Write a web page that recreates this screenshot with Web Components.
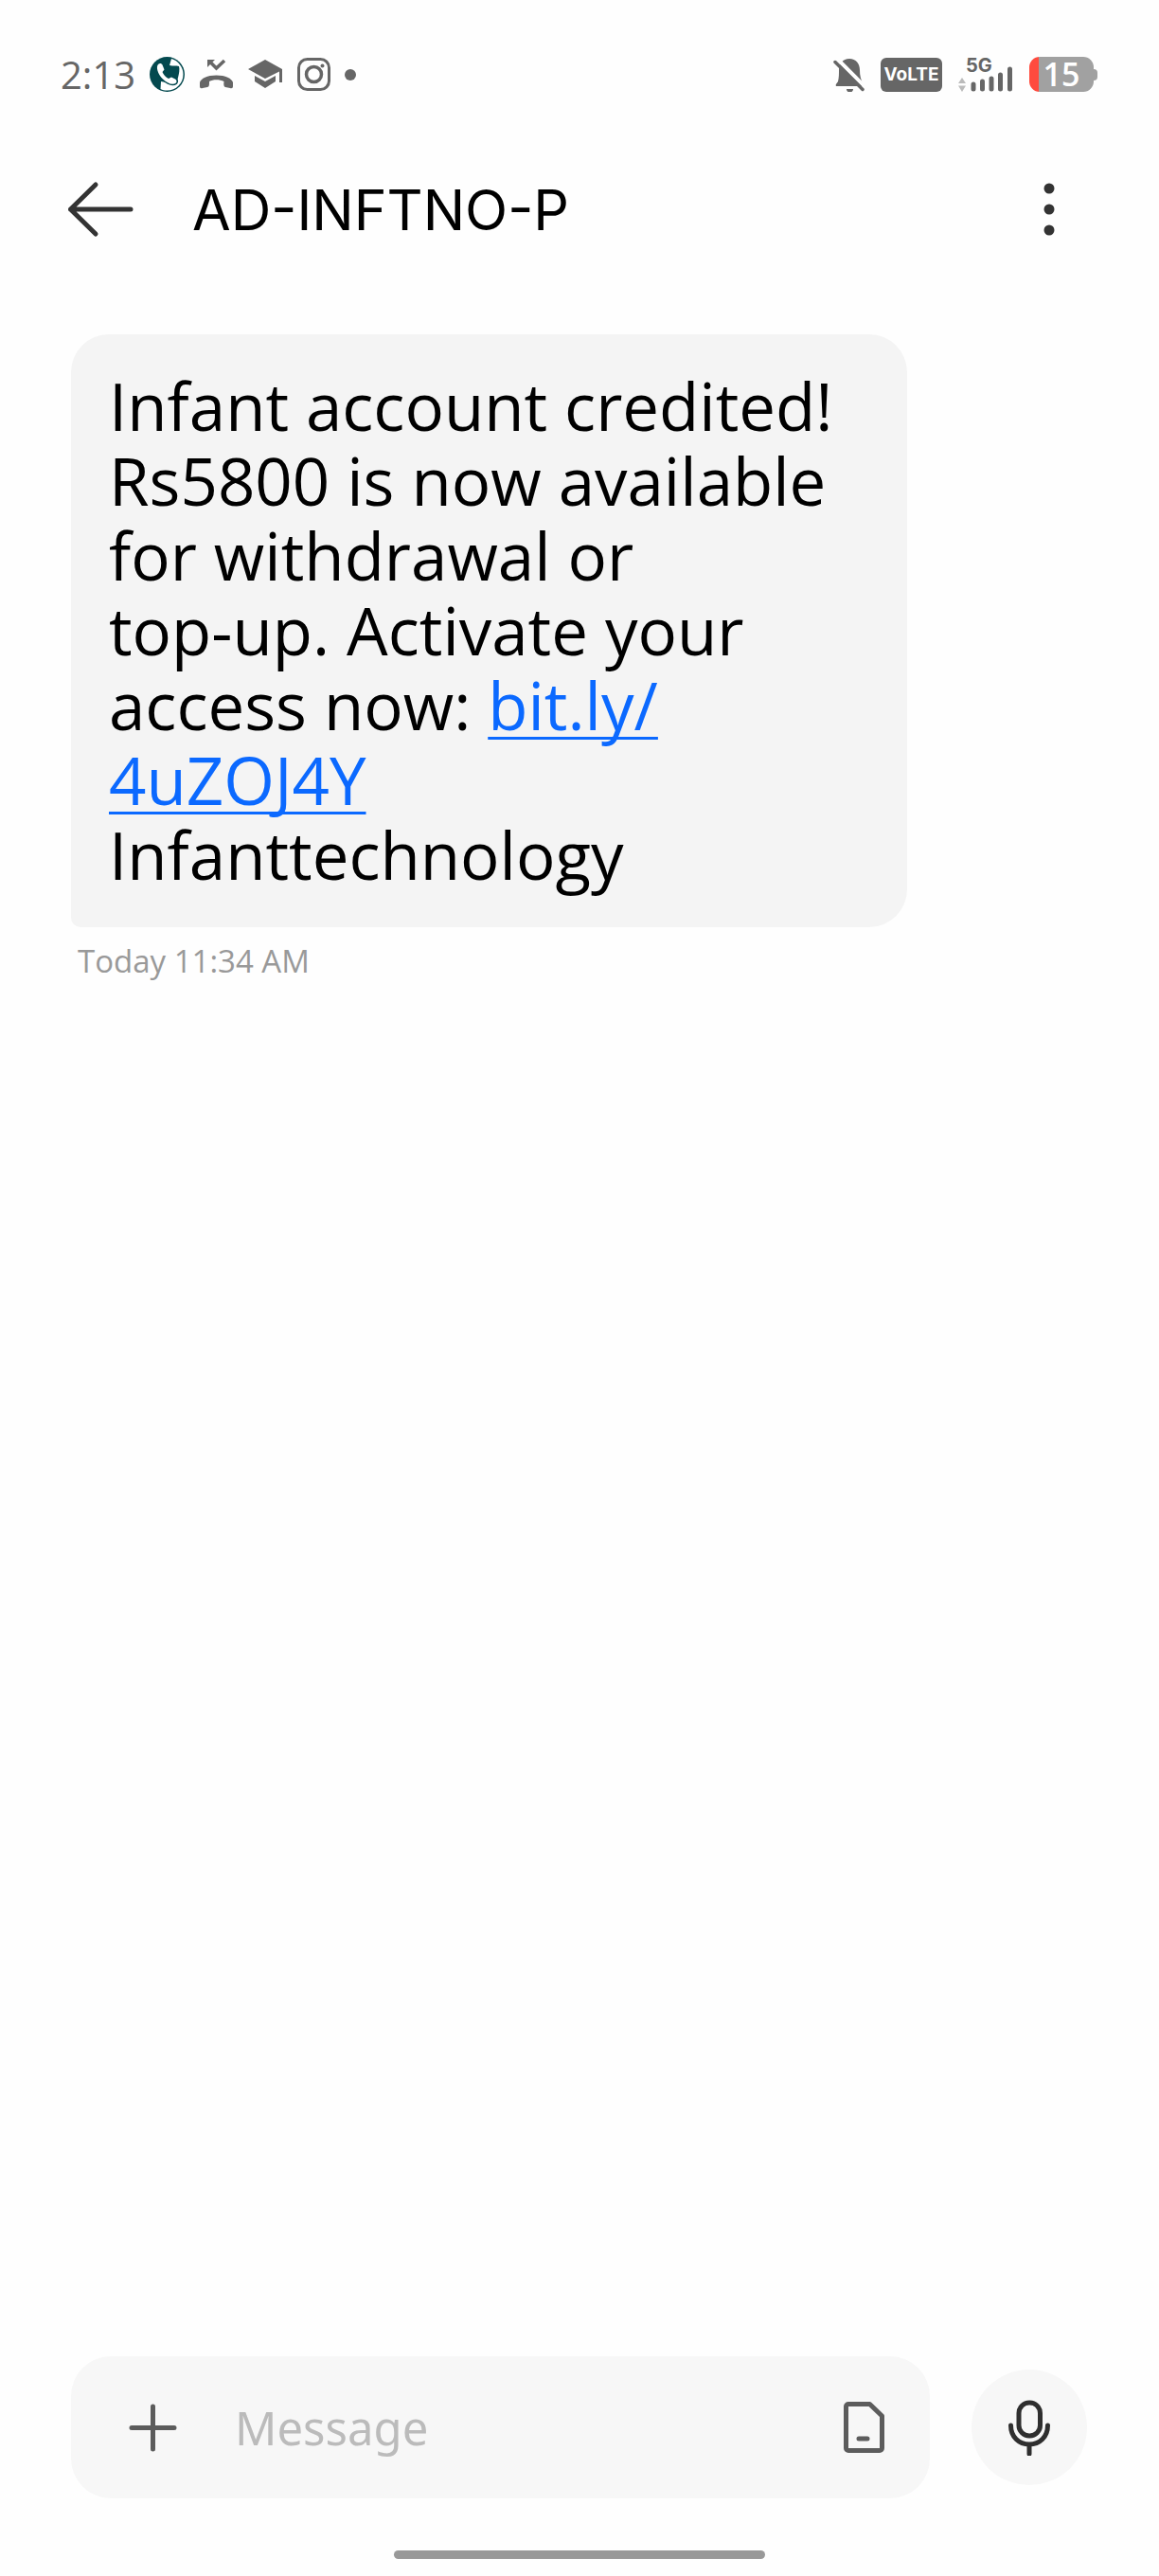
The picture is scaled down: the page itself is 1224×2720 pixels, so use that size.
<!DOCTYPE html>
<html lang="en">
<head>
<meta charset="utf-8">
<meta name="viewport" content="width=device-width, initial-scale=1">
<title>AD-INFTNO-P</title>
<style>
  body {
    margin: 0;
    background: #fefefe;
    color: #000;
    font-family: "Open Sans", "Noto Sans", sans-serif;
  }
</style>
</head>
<body>
<message-screen>
  <status-bar slot="status" time="2:13" battery="15"></status-bar>
  <thread-header slot="header">AD-INFTNO-P</thread-header>
  <message-bubble time="Today 11:34 AM">Infant account credited! Rs5800 is now available for withdrawal or <span style="white-space: nowrap">top-up.</span> Activate your access now: <a href="https://bit.ly/4uZOJ4Y">bit.ly/<wbr>4uZOJ4Y</a><br>Infanttechnology</message-bubble>
  <message-composer slot="composer"></message-composer>
</message-screen>

<script>
/**
 * @class MessageScreen
 * @description Full height column: status bar, header, messages, composer and the gesture bar.
 */
class MessageScreen extends HTMLElement {
  constructor() {
    super()
    this.attachShadow({ mode: 'open' })
    this.shadowRoot.innerHTML = `
      <style>
        :host {
          display: flex;
          flex-direction: column;
          min-height: 100vh;
          box-sizing: border-box;
          padding-bottom: 18px;
        }

        main {
          flex: 1;
          padding: 72px 72px 0 75px;
        }

        .gesture-bar {
          width: 32%;
          height: 9px;
          margin: 55px auto 0;
          border-radius: 5px;
          background: #999;
        }
      </style>

      <slot name="status"></slot>
      <slot name="header"></slot>
      <main><slot></slot></main>
      <slot name="composer"></slot>
      <div class="gesture-bar"></div>
    `
  }
}

/**
 * @class StatusBar
 * @property {string} time - Clock text
 * @property {string} battery - Charge in percent
 */
class StatusBar extends HTMLElement {
  constructor() {
    super()
    this.attachShadow({ mode: 'open' })
  }

  connectedCallback() {
    this.render()
  }

  render() {
    this.shadowRoot.innerHTML = `
      <style>
        :host {
          display: flex;
          justify-content: space-between;
          padding: 60px 65px 0 64px;
          color: #666;
        }

        .group {
          display: flex;
          align-items: center;
          height: 37px;
          gap: 15px;
        }

        .group.system {
          gap: 17px;
        }

        .clock {
          font-size: 40px;
          line-height: 37px;
        }

        svg {
          display: block;
          flex: none;
        }

        .volte {
          width: 65px;
          height: 36px;
          border-radius: 6px;
          background: #666;
          color: #fff;
          font: 700 19px/36px Inter, sans-serif;
          text-align: center;
        }

        .signal {
          position: relative;
          width: 58px;
          height: 37px;
        }

        .signal span {
          position: absolute;
          left: 8px;
          top: 0;
          font: 700 20px/18px Inter, sans-serif;
        }

        .power {
          display: flex;
          align-items: center;
        }

        .battery {
          width: 68px;
          height: 37px;
          border-radius: 11px;
          background: linear-gradient(to right, #ff4b3e 15%, #a1a1a1 15%);
          color: #fff;
          font: 600 34px/37px "Open Sans", sans-serif;
          text-align: center;
        }

        .tip {
          width: 4px;
          height: 12px;
          border-radius: 0 4px 4px 0;
          background: #a1a1a1;
        }
      </style>

      <div class="group">
        <span class="clock">${this.getAttribute('time')}</span>
        <svg width="37" height="37" viewBox="0 0 37 37">
          <circle cx="18.500" cy="18.500" r="18.500" fill="#04494f"/>
          <path d="M23 2C30 4 35.500 11 35.500 18.500C35.500 28 28 35.500 18.500 35.500C16 35.500 13.500 35 11.500 34L12 26L28 29L30 22C31 18 32 13 31 10C28 9 25 10 21 9Z" fill="#fff"/>
          <path d="M9 8C6.500 11 8.500 18 14 23.500C19 28 24 30.500 28 27.500C29 26 28.500 24.500 27 23.500L23 21.500L20 23C17 21.500 14.500 18.500 13.500 16L15.500 13.500L13.500 8.500C12.500 6.500 10.500 6.500 9 8Z" fill="#fff" stroke="#04494f" stroke-width="3" paint-order="stroke"/>
        </svg>
        <svg width="37" height="37" viewBox="0 0 37 37" fill="#666">
          <path d="M1 31V27C2 23 9 19.500 18.500 19.500S35 23 36 27V31C36 33 35 33.500 33 33L28 32C26.500 31.500 26 30 26.500 26C22 23.500 15 23.500 11 26C11 30 11 31.500 9 32L4 33C2 33.500 1 33 1 31Z"/>
          <path d="M12 5.500L18.500 12L27 4" fill="none" stroke="#666" stroke-width="3.500"/>
          <path d="M9 3H17L9 11Z"/>
        </svg>
        <svg width="37" height="37" viewBox="0 0 37 37" fill="#666">
          <path d="M0 13L18 3L36 13V27H33V15.500L18 23Z"/>
          <path d="M7 20L18 26L29 20V26L18 33L7 26Z"/>
        </svg>
        <svg width="35" height="37" viewBox="0 0 35 37" fill="none" stroke="#666" stroke-width="3">
          <rect x="1.500" y="2.500" width="32" height="32" rx="9"/>
          <circle cx="17.500" cy="18.500" r="8" stroke-width="3.500"/>
          <circle cx="26.500" cy="9.500" r="2" fill="#666" stroke="none"/>
        </svg>
        <svg width="12" height="12" viewBox="0 0 12 12"><circle cx="6" cy="6" r="6" fill="#666"/></svg>
      </div>

      <div class="group system">
        <svg width="33" height="37" viewBox="0 0 33 37" fill="#666">
          <path d="M5 26C6 22 6 18 6 14C6 7 10 2 17 2S28 7 28 14C28 20 29 24 32 30V31H3C2 29 4 28 5 26Z"/>
          <path d="M14 34H21C21 36 19.500 37.500 17.500 37.500S14 36 14 34Z"/>
          <path d="M4 2L34 32" stroke="#fefefe" stroke-width="4"/>
          <path d="M2 5.500L31 34.500" stroke="#666" stroke-width="3.500" stroke-linecap="round"/>
        </svg>
        <span class="volte">VoLTE</span>
        <div class="signal">
          <span>5G</span>
          <svg width="58" height="37" viewBox="0 0 58 37">
            <path d="M0 28L4 22L8 28ZM0 30.500L4 37L8 30.500Z" fill="#bbb"/>
            <path d="M16 29V34M25.500 26V34M35 23V34M44.500 19V34M54.500 13V34" fill="none" stroke="#666" stroke-width="5" stroke-linecap="round"/>
          </svg>
        </div>
        <div class="power">
          <div class="battery">${this.getAttribute('battery')}</div>
          <div class="tip"></div>
        </div>
      </div>
    `
  }
}

/**
 * @class ThreadHeader
 * @description Back button, sender name from the slot, overflow menu button.
 */
class ThreadHeader extends HTMLElement {
  constructor() {
    super()
    this.attachShadow({ mode: 'open' })
    this.shadowRoot.innerHTML = `
      <style>
        :host {
          display: flex;
          align-items: center;
          height: 120px;
          padding: 64px 104px 0 70px;
        }

        button {
          display: block;
          padding: 0;
          border: 0;
          background: none;
        }

        svg {
          display: block;
        }

        h1 {
          flex: 1;
          margin: 0 0 0 61px;
          padding-top: 2px;
          font: 400 59px/80px Inter, sans-serif;
        }
      </style>

      <button type="button" aria-label="Back">
        <svg width="72" height="60" viewBox="0 0 72 60" fill="none" stroke="#333" stroke-width="5" stroke-linecap="round" stroke-linejoin="round">
          <path d="M31 4L4.500 30L31 56M4.500 30H68"/>
        </svg>
      </button>
      <h1><slot></slot></h1>
      <button type="button" aria-label="More options">
        <svg width="24" height="60" viewBox="0 0 24 60" fill="#333">
          <circle cx="12" cy="8" r="5.500"/>
          <circle cx="12" cy="30" r="5.500"/>
          <circle cx="12" cy="52" r="5.500"/>
        </svg>
      </button>
    `
  }
}

/**
 * @class MessageBubble
 * @description Received message with its time below.
 * @property {string} time - Time label
 * @property {string} --bubble-bg - Background of the bubble (default: #f4f4f4)
 */
class MessageBubble extends HTMLElement {
  constructor() {
    super()
    this.attachShadow({ mode: 'open' })
  }

  connectedCallback() {
    this.render()
  }

  render() {
    this.shadowRoot.innerHTML = `
      <style>
        :host {
          --bubble-bg: #f4f4f4;

          display: block;
        }

        .bubble {
          width: 82%;
          box-sizing: border-box;
          padding: 36px 40px 37px;
          border-radius: 40px 40px 40px 10px;
          background: var(--bubble-bg);
          font-size: 69px;
          line-height: 79px;
        }

        ::slotted(a) {
          color: #0b69ff;
          text-decoration: underline;
          text-decoration-thickness: 3px;
          text-underline-offset: 7px;
          text-decoration-skip-ink: none;
        }

        time {
          display: block;
          margin: 16px 0 0 7px;
          color: #999;
          font-size: 33px;
          line-height: 40px;
        }
      </style>

      <div class="bubble"><slot></slot></div>
      <time>${this.getAttribute('time')}</time>
    `
  }
}

/**
 * @class MessageComposer
 * @description Text field with attach and SIM buttons, and the voice button next to it.
 */
class MessageComposer extends HTMLElement {
  constructor() {
    super()
    this.attachShadow({ mode: 'open' })
    this.shadowRoot.innerHTML = `
      <style>
        :host {
          --field-bg: #f7f7f7;

          display: flex;
          align-items: center;
          gap: 44px;
          padding: 0 76px 0 75px;
        }

        .field {
          flex: 1;
          min-width: 0;
          display: flex;
          align-items: center;
          height: 150px;
          box-sizing: border-box;
          padding: 0 44px 0 60px;
          border-radius: 42px;
          background: var(--field-bg);
        }

        button {
          flex: none;
          display: block;
          padding: 0;
          border: 0;
          background: none;
        }

        svg {
          display: block;
          margin: auto;
          fill: none;
          stroke: #5c5c5c;
          stroke-width: 5;
          stroke-linecap: round;
          stroke-linejoin: round;
        }

        input {
          flex: 1;
          min-width: 0;
          margin: 0 20px 0 61px;
          padding: 0;
          border: 0;
          outline: 0;
          background: none;
          color: #000;
          font: 49px/66px "Noto Sans", sans-serif;
        }

        input::placeholder {
          color: #bbb;
          opacity: 1;
        }

        .voice {
          width: 122px;
          height: 122px;
          border-radius: 50%;
          background: var(--field-bg);
        }

        .voice svg {
          stroke: #2f2f2f;
        }
      </style>

      <div class="field">
        <button type="button" aria-label="Attach">
          <svg width="52" height="52" viewBox="0 0 52 52"><path d="M26.500 4V49M4 26.500H49"/></svg>
        </button>
        <input type="text" placeholder="Message" aria-label="Message">
        <button type="button" aria-label="Choose SIM">
          <svg width="48" height="56" viewBox="0 0 48 56">
            <path d="M6 3.500H28.500L41.500 16V50A2.500 2.500 0 0 1 39 52.500H6A2.500 2.500 0 0 1 3.500 50V6A2.500 2.500 0 0 1 6 3.500ZM17 40H26"/>
          </svg>
        </button>
      </div>
      <button class="voice" type="button" aria-label="Voice message">
        <svg width="46" height="60" viewBox="0 0 46 60">
          <rect x="12" y="4" width="22.500" height="35" rx="11"/>
          <path d="M3.500 28C3.500 40 12 48 23 48S42.500 40 42.500 28M23 48V58"/>
        </svg>
      </button>
    `
  }
}

// Register the web components
customElements.define('message-screen', MessageScreen)
customElements.define('status-bar', StatusBar)
customElements.define('thread-header', ThreadHeader)
customElements.define('message-bubble', MessageBubble)
customElements.define('message-composer', MessageComposer)
</script>
</body>
</html>
